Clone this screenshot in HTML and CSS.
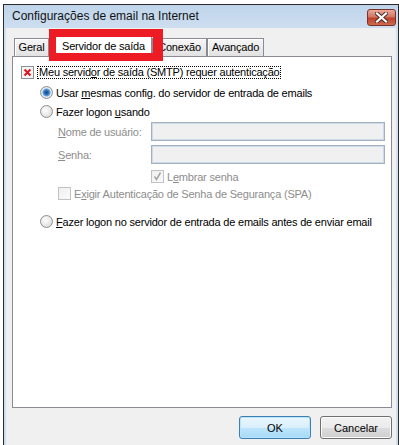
FILE: index.html
```html
<!DOCTYPE html>
<html lang="pt">
<head>
  <meta charset="UTF-8">
  <title>Configurações de email na Internet</title>
  <link rel="stylesheet" href="styles.css">
</head>
<body>
<div class="window">
  <!-- barra de título -->
  <div class="titlebar">
    <span class="title">Configurações de email na Internet</span>
    <span class="close">
      <svg width="13" height="11" viewBox="0 0 13 11">
        <path d="M2 1.5 L11 9.5 M11 1.5 L2 9.5" stroke="#4a2a24" stroke-width="4" stroke-linecap="square"/>
        <path d="M2 1.5 L11 9.5 M11 1.5 L2 9.5" stroke="#ffffff" stroke-width="2.2" stroke-linecap="square"/>
      </svg>
    </span>
  </div>

  <div class="client">
    <!-- abas -->
    <div class="tabs">
      <div class="tab tab-geral">Geral</div>
      <div class="tab tab-active">Servidor de saída</div>
      <div class="tab tab-conexao">Conexão</div>
      <div class="tab tab-avancado">Avançado</div>
      <div class="mark"></div>
    </div>

    <div class="panel">
      <div class="row row-auth">
        <span class="check check-x">
          <svg width="13" height="13" viewBox="0 0 13 13">
            <path d="M3 3 L10 10 M10 3 L3 10" stroke="#e0121b" stroke-width="2.4"/>
          </svg>
        </span>
        <span class="label focus">Meu servid<u>o</u>r de saída (SMTP) requer autenticação</span>
      </div>

      <div class="row row-radio row-same">
        <span class="radio radio-on"></span>
        <span class="label">Usar <u>m</u>esmas config. do servidor de entrada de emails</span>
      </div>

      <div class="row row-radio row-logon">
        <span class="radio"></span>
        <span class="label">Fazer logon <u>u</u>sando</span>
      </div>

      <div class="row row-field row-user">
        <span class="field-label"><u>N</u>ome de usuário:</span>
        <span class="input"></span>
      </div>

      <div class="row row-field row-pass">
        <span class="field-label"><u>S</u>enha:</span>
        <span class="input"></span>
      </div>

      <div class="row row-remember">
        <span class="check check-off">
          <svg width="11" height="11" viewBox="0 0 11 11">
            <path d="M2.5 5.5 L4.5 8.5 L8.5 1.5" stroke="#a8a8a8" stroke-width="1.6" fill="none"/>
          </svg>
        </span>
        <span class="label dim">L<u>e</u>mbrar senha</span>
      </div>

      <div class="row row-spa">
        <span class="check check-off"></span>
        <span class="label dim">E<u>x</u>igir Autenticação de Senha de Segurança (SPA)</span>
      </div>

      <div class="row row-radio row-before">
        <span class="radio"></span>
        <span class="label"><u>F</u>azer logon no servidor de entrada de emails antes de enviar email</span>
      </div>
    </div>

    <div class="buttons">
      <button class="btn btn-default">OK</button>
      <button class="btn">Cancelar</button>
    </div>
  </div>
</div>
</body>
</html>
```

FILE: styles.css
```css
* {
  box-sizing: border-box;
}

body {
  margin: 0;
  background: #fff;
  font-family: "Liberation Sans", Arial, sans-serif;
  font-size: 11px;
  letter-spacing: -0.2px;
  color: #000;
}

/* janela */
.window {
  margin: 4px 0 0 3px;
  width: 396px;
  height: 441px;
  border: 1px solid #2b2b2b;
  border-bottom: 0;
  padding: 0 2px;
  background: linear-gradient(#bfd4eb, #d2e1f1 30px, #cddef0);
  display: flex;
  flex-direction: column;
}

.titlebar {
  height: 23px;
  display: flex;
  justify-content: space-between;
  align-items: flex-start;
}

.title {
  padding-left: 6px;
  line-height: 23px;
  font-size: 12px;
  letter-spacing: 0;
  color: #111;
}

.close {
  margin-top: 4px;
  width: 29px;
  height: 17px;
  border: 1px solid #7a3226;
  border-radius: 3px;
  background: linear-gradient(#e9a99a, #d47663 45%, #c0412b 55%, #cf6a4e);
  display: flex;
  align-items: center;
  justify-content: center;
}

/* área cinza */
.client {
  flex: 1;
  background: #f0f0f0;
  padding: 8px 0 0 6px;
}

/* abas */
.tabs {
  position: relative;
  display: flex;
  align-items: flex-end;
  height: 20px;
  margin-left: 2px;
}

.tab {
  height: 18px;
  border: 1px solid #898c95;
  border-bottom: 0;
  background: linear-gradient(#f6f6f6, #ececec 50%, #e2e2e2);
  box-shadow: inset 1px 1px 0 #fff;
  line-height: 16px;
  text-align: center;
}

.tab-geral { width: 35px; }
.tab-conexao { width: 55px; }
.tab-avancado { width: 57px; }

.tab-active {
  width: 103px;
  height: 21px;
  margin-bottom: -1px;
  background: #fff;
  box-shadow: none;
  text-align: left;
  padding-left: 12px;
  line-height: 19px;
  position: relative;
  z-index: 1;
}

/* marcação vermelha sobre a aba */
.mark {
  position: absolute;
  left: 35px;
  top: -7px;
  width: 114px;
  height: 32px;
  border-style: solid;
  border-color: #ed1c24;
  border-width: 8px 10px 8px 7px;
  z-index: 2;
}

.panel {
  width: 380px;
  height: 352px;
  border: 1px solid #898c95;
  background: #fff;
  padding-top: 9px;
}

.row {
  display: flex;
  align-items: center;
  height: 13px;
}

.row-auth { padding-left: 8px; }
.row-radio { padding-left: 27px; }
.row-same { margin-top: 7px; }
.row-logon { margin-top: 6px; }

.row-field {
  height: 19px;
  padding-left: 45px;
  margin-top: 4px;
}

.row-remember {
  padding-left: 138px;
  margin-top: 6px;
}

.row-spa {
  padding-left: 45px;
  margin-top: 4px;
}

.row-before { margin-top: 15px; }

.label {
  margin-left: 3px;
  white-space: nowrap;
}

.focus {
  border: 1px dotted #000;
  line-height: 11px;
  padding: 0 1px;
  height: 13px;
}

.dim,
.field-label {
  color: #8d8d8d;
}

.field-label {
  width: 93px;
}

.input {
  width: 234px;
  height: 19px;
  border: 1px solid #a9afb6;
  box-shadow: inset 0 0 0 1px #c8dbef;
  background: #f0f0f0;
}

/* caixas de seleção */
.check {
  width: 13px;
  height: 13px;
  flex: none;
  border: 1px solid #8e8f8f;
  background: linear-gradient(135deg, #e6e6e6, #fafafa);
  display: flex;
  align-items: center;
  justify-content: center;
}

.check-x {
  background: #f4f4f4;
}

.check-off {
  border-color: #c2c2c2;
  background: linear-gradient(135deg, #efefef, #fbfbfb);
}

.radio {
  width: 13px;
  height: 13px;
  flex: none;
  border: 1px solid #8e8f8f;
  border-radius: 50%;
  background: radial-gradient(circle at 40% 40%, #ffffff, #e4e4e4 60%, #cfcfcf);
}

.radio-on {
  background: radial-gradient(circle, #18427a 0, #2e6fb8 2px, #5fa3e2 3.5px, #e8eef5 4.5px, #d9d9d9 6px);
}

/* botões */
.buttons {
  width: 380px;
  margin-top: 8px;
  display: flex;
  justify-content: flex-end;
  gap: 9px;
}

.btn {
  width: 72px;
  height: 23px;
  font-family: inherit;
  font-size: 11px;
  letter-spacing: 0;
  color: #000;
  border: 1px solid #707070;
  border-radius: 3px;
  background: linear-gradient(#f2f2f2, #ebebeb 50%, #dddddd 50%, #cfcfcf);
  box-shadow: inset 0 0 0 1px #fbfbfb;
  padding: 0;
}

.btn-default {
  border-color: #3c7fb1;
  background: linear-gradient(#eaf6fd, #d9f0fc 50%, #bee6fd 50%, #a7d9f5);
  box-shadow: inset 0 0 0 1px #b8e4fb;
}
```
